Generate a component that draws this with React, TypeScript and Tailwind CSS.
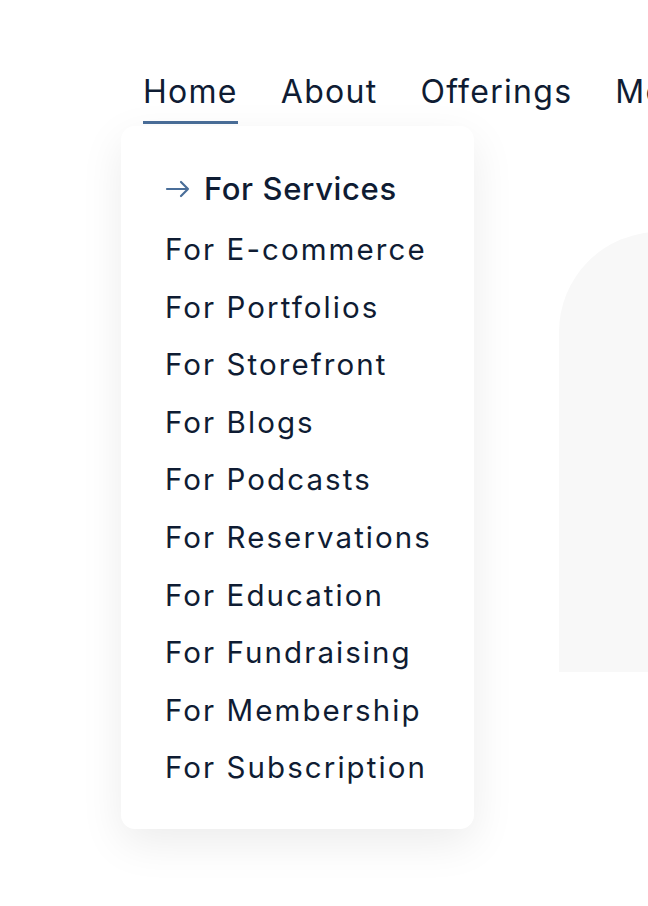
const items = [
  'For E-commerce',
  'For Portfolios',
  'For Storefront',
  'For Blogs',
  'For Podcasts',
  'For Reservations',
  'For Education',
  'For Fundraising',
  'For Membership',
  'For Subscription',
];

const navLinks = ['Home', 'About', 'Offerings', 'More'];

const Arrow = () => (
  <svg width="25" height="18" viewBox="0 0 25 18" fill="none" className="shrink-0 text-[#4a6e99]">
    <path d="M2 9h21M16 2l7 7-7 7" stroke="currentColor" strokeWidth="2.2" strokeLinecap="round" strokeLinejoin="round" />
  </svg>
);

export default function App() {
  return (
    <div
      className="relative w-[648px] h-[906px] overflow-hidden bg-white text-[#0f1c33]"
      style={{ fontFamily: 'Inter, "Noto Sans", sans-serif' }}
    >
      <nav className="pt-[70px] pl-[143px]">
        <ul className="flex gap-[43px] whitespace-nowrap">
          {navLinks.map((label, i) => (
            <li key={label} className="relative">
              <a
                className="block text-[32px] tracking-[0.04em] leading-[44px] pb-[7px] border-b-[3px] border-transparent data-[active=true]:border-[#4a6e99]"
                data-active={i === 0}
              >
                {label}
              </a>
              {i === 0 && (
                <div className="absolute left-[-22px] top-[56px] z-10 w-[353px] rounded-[14px] bg-white pt-[43px] pb-[42px] pl-[44px] shadow-[0_14px_44px_rgba(0,0,0,0.08)]">
                  <div className="flex items-center gap-[14px] text-[31px] tracking-[0.02em] font-medium leading-[40px]">
                    <Arrow />
                    For Services
                  </div>
                  <ul className="mt-[20px] flex flex-col gap-[17.6px]">
                    {items.map((t) => (
                      <li key={t} className="text-[29.5px] tracking-[0.07em] leading-[40px]">
                        {t}
                      </li>
                    ))}
                  </ul>
                </div>
              )}
            </li>
          ))}
        </ul>
      </nav>

      <div className="flex justify-end mt-[108px]">
        <div className="w-[120px] h-[440px] mr-[-31px] shrink-0 rounded-tl-[100px] bg-[#f8f8f8]" />
      </div>
    </div>
  );
}
